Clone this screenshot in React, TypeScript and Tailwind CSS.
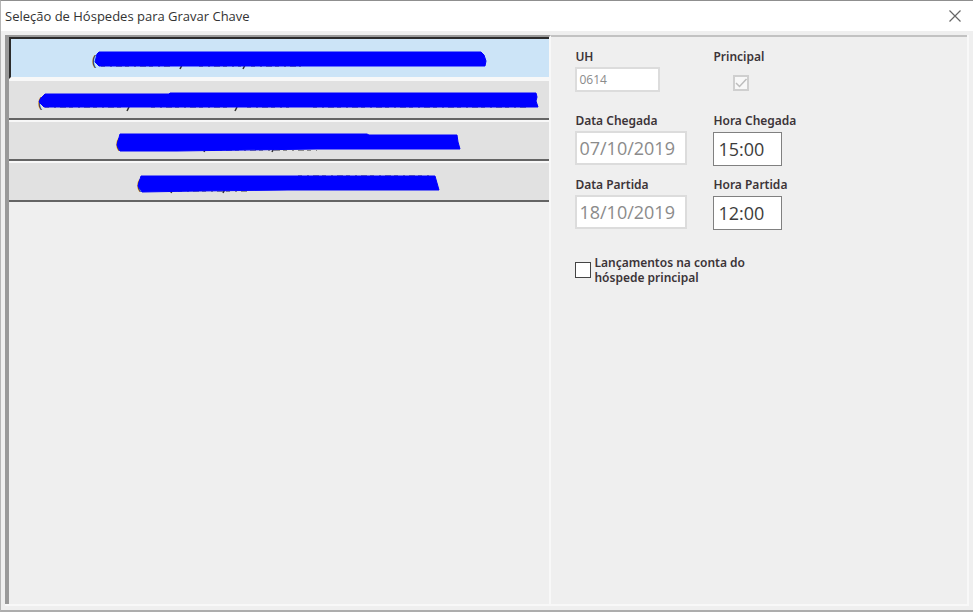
import React, { useState } from 'react';

interface Guest {
  id: number;
  width: number;
  stroke: string;
  commas: number[];
  residue: string;
}

// Guest names are covered by a hand drawn marker
const GUESTS: Guest[] = [
  { id: 1, width: 393, stroke: '4,7 6,5 388,5 391,8 393,14 392,19 6,19 2,15 3,11', commas: [89, 152], residue: 'M8 19.5H80M106 19.5H148M158 19.5H208' },
  { id: 2, width: 499, stroke: '6,5 130,5 131,4 497,4 498,8 497,12 499,18 5,18 0,13 2,9', commas: [90, 198], residue: 'M6 18.5H82M112 18.5H192M208 18.5H250M274 18.5H490' },
  { id: 3, width: 343, stroke: '3,4 46,4 250,4 252,5 340,5 341,12 343,19 200,19 60,21 3,21 0,15', commas: [89, 157], residue: 'M94 20.5H200' },
  { id: 4, width: 301, stroke: '3,5 156,5 297,5 299,12 301,19 150,19 60,20 4,21 0,15', commas: [35, 87], residue: 'M40 20.5H110M160 4.5H292' },
];

const label = "font-['Noto_Sans',sans-serif] text-[12px] leading-4 font-semibold text-[#3c3438]";
const disabledField = 'block border-2 border-[#dcdcdc] bg-white text-[#8b8b8b] outline-none';
const timeField = 'block h-[34px] w-[69px] border border-[#808080] bg-white px-1 text-[18px] leading-6 text-[#3c3c3c] outline-none';

const Redaction: React.FC<{ guest: Guest }> = ({ guest }) => (
  <svg width={guest.width} height="26" viewBox={`0 0 ${guest.width} 26`} className="overflow-visible" aria-hidden="true">
    <text x="-1" y="18" fontSize="15" fill="#333" fontFamily="Open Sans, sans-serif">(</text>
    {guest.commas.map(x => (
      <path key={x} d={`M${x} 18L${x - 2} 22`} stroke="#333" strokeWidth="1.5" />
    ))}
    <path d={guest.residue} stroke="#555" strokeWidth="1" strokeDasharray="4 5 2 4 6 3" opacity="0.6" />
    <polygon points={guest.stroke} fill="#0000ff" stroke="#0000ff" strokeWidth="1" strokeLinejoin="round" />
  </svg>
);

const App: React.FC = () => {
  const [selected, setSelected] = useState(1);
  const [arrival, setArrival] = useState('15:00');
  const [departure, setDeparture] = useState('12:00');
  const [chargeMain, setChargeMain] = useState(false);

  return (
    <div className="flex min-h-screen flex-col border-t border-b-2 border-l border-t-[#8f8f8f] border-b-[#adadad] border-l-[#b5b5b5] bg-[#efefef] font-['Open_Sans','Noto_Sans',sans-serif]">

      {/* Title bar */}
      <header className="flex h-[30px] items-center justify-between bg-white pr-3 pl-1">
        <h1 className="text-[13px] leading-5 text-[#333]">Seleção de Hóspedes para Gravar Chave</h1>
        <button type="button" aria-label="Fechar" className="p-0">
          <svg width="12" height="12" viewBox="0 0 12 12" fill="none" stroke="#666" strokeWidth="1.2">
            <path d="M.5.5l11 11M11.5.5l-11 11" />
          </svg>
        </button>
      </header>

      <main className="m-1 flex grow border-r-2 border-b-2 border-[#f8f8f8]">

        {/* Guest list */}
        <section className="w-[56.8%] border-t-2 border-r-2 border-l-4 border-t-[#999] border-r-[#f8f8f8] border-l-[#999]">
          <ul>
            {GUESTS.map(guest => (
              <li key={guest.id}>
                <button
                  type="button"
                  aria-label={`Hóspede ${guest.id}`}
                  onClick={() => setSelected(guest.id)}
                  className={`flex w-full items-center justify-center pl-[18px] ${
                    selected === guest.id
                      ? 'h-[42px] border-t-2 border-b-2 border-l-2 border-t-[#2b2b2b] border-b-[#f8f8f8] border-l-[#2b2b2b] bg-[#cce4f7] pt-1'
                      : 'h-[41px] border-t-2 border-b-2 border-t-[#f8f8f8] border-b-[#646464] bg-[#e1e1e1] pt-1'
                  }`}
                >
                  <Redaction guest={guest} />
                </button>
              </li>
            ))}
          </ul>
        </section>

        {/* Stay details */}
        <section className="grow border-t-2 border-[#c2c2c2] pt-3 pl-6">
          <div className="grid grid-cols-[138px_1fr]">
            <div className="h-16">
              <label htmlFor="uh" className={`block ${label}`}>UH</label>
              <input id="uh" disabled value="0614" className={`${disabledField} mt-0.5 h-[25px] w-[85px] px-0.5 text-[12px] leading-4`} />
            </div>
            <div className="h-16">
              <label htmlFor="principal" className={`block ${label}`}>Principal</label>
              <span className="mt-2.5 ml-5 grid size-4">
                <input id="principal" type="checkbox" checked disabled className="col-start-1 row-start-1 size-4 appearance-none border-2 border-[#cfcfcf] bg-[#f8f8f8]" />
                <svg viewBox="0 0 16 16" className="pointer-events-none col-start-1 row-start-1 size-4" fill="none" stroke="#bdbdbd" strokeWidth="1.5">
                  <path d="M3 8l3.5 3.5L13.5 4" />
                </svg>
              </span>
            </div>
            <div className="h-16">
              <label htmlFor="arrival-date" className={`block ${label}`}>Data Chegada</label>
              <input id="arrival-date" disabled value="07/10/2019" className={`${disabledField} mt-0.5 h-[34px] w-28 px-0.5 text-[18px] leading-6`} />
            </div>
            <div className="h-16">
              <label htmlFor="arrival-time" className={`block ${label}`}>Hora Chegada</label>
              <input id="arrival-time" value={arrival} onChange={e => setArrival(e.target.value)} className={`${timeField} mt-[3px]`} />
            </div>
            <div className="h-16">
              <label htmlFor="departure-date" className={`block ${label}`}>Data Partida</label>
              <input id="departure-date" disabled value="18/10/2019" className={`${disabledField} mt-0.5 h-[34px] w-28 px-0.5 text-[18px] leading-6`} />
            </div>
            <div className="h-16">
              <label htmlFor="departure-time" className={`block ${label}`}>Hora Partida</label>
              <input id="departure-time" value={departure} onChange={e => setDeparture(e.target.value)} className={`${timeField} mt-[3px]`} />
            </div>
          </div>

          <div className="mt-3.5 flex items-center gap-[3px]">
            <input
              id="charge-main"
              type="checkbox"
              checked={chargeMain}
              onChange={e => setChargeMain(e.target.checked)}
              className="size-4 shrink-0 appearance-none border border-[#444] bg-white checked:bg-[#666]"
            />
            <label htmlFor="charge-main" className="w-44 font-['Noto_Sans',sans-serif] text-[12px] leading-[15px] font-semibold text-[#3c3438]">
              Lançamentos na conta do hóspede principal
            </label>
          </div>
        </section>
      </main>
    </div>
  );
};

export default App;
